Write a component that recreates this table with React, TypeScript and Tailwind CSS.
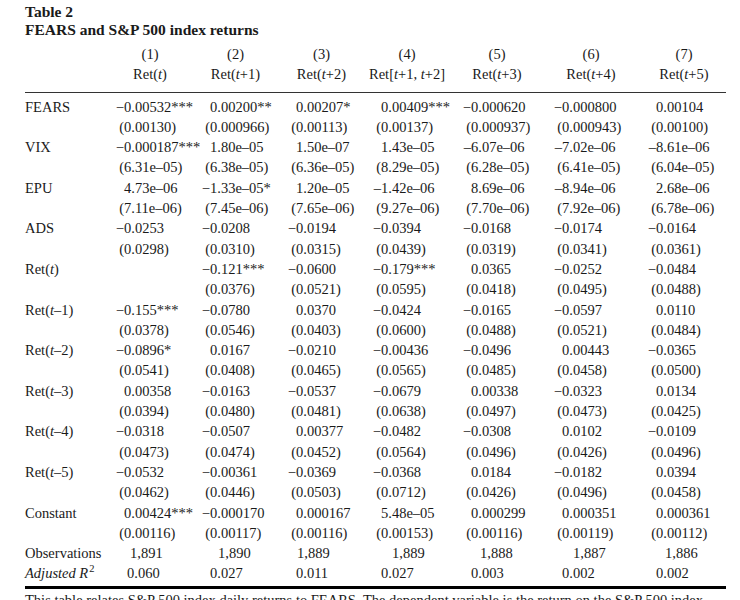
import type { ReactNode } from "react";

const T = () => <span className="italic">t</span>;

type Row = { label: ReactNode; coef: string[]; se: string[] };

const rows: Row[] = [
  {
    label: "FEARS",
    coef: ["−0.00532***", "0.00200**", "0.00207*", "0.00409***", "−0.000620", "−0.000800", "0.00104"],
    se: ["(0.00130)", "(0.000966)", "(0.00113)", "(0.00137)", "(0.000937)", "(0.000943)", "(0.00100)"],
  },
  {
    label: "VIX",
    coef: ["−0.000187***", "1.80e–05", "1.50e–07", "1.43e–05", "–6.07e–06", "–7.02e–06", "–8.61e–06"],
    se: ["(6.31e–05)", "(6.38e–05)", "(6.36e–05)", "(8.29e–05)", "(6.28e–05)", "(6.41e–05)", "(6.04e–05)"],
  },
  {
    label: "EPU",
    coef: ["4.73e–06", "−1.33e–05*", "1.20e–05", "–1.42e–06", "8.69e–06", "–8.94e–06", "2.68e–06"],
    se: ["(7.11e–06)", "(7.45e–06)", "(7.65e–06)", "(9.27e–06)", "(7.70e–06)", "(7.92e–06)", "(6.78e–06)"],
  },
  {
    label: "ADS",
    coef: ["−0.0253", "−0.0208", "−0.0194", "−0.0394", "−0.0168", "−0.0174", "−0.0164"],
    se: ["(0.0298)", "(0.0310)", "(0.0315)", "(0.0439)", "(0.0319)", "(0.0341)", "(0.0361)"],
  },
  {
    label: <>Ret(<T />)</>,
    coef: ["", "−0.121***", "−0.0600", "−0.179***", "0.0365", "−0.0252", "−0.0484"],
    se: ["", "(0.0376)", "(0.0521)", "(0.0595)", "(0.0418)", "(0.0495)", "(0.0488)"],
  },
  {
    label: <>Ret(<T />–1)</>,
    coef: ["−0.155***", "−0.0780", "0.0370", "−0.0424", "−0.0165", "−0.0597", "0.0110"],
    se: ["(0.0378)", "(0.0546)", "(0.0403)", "(0.0600)", "(0.0488)", "(0.0521)", "(0.0484)"],
  },
  {
    label: <>Ret(<T />–2)</>,
    coef: ["−0.0896*", "0.0167", "−0.0210", "−0.00436", "−0.0496", "0.00443", "−0.0365"],
    se: ["(0.0541)", "(0.0408)", "(0.0465)", "(0.0565)", "(0.0485)", "(0.0458)", "(0.0500)"],
  },
  {
    label: <>Ret(<T />–3)</>,
    coef: ["0.00358", "−0.0163", "−0.0537", "−0.0679", "0.00338", "−0.0323", "0.0134"],
    se: ["(0.0394)", "(0.0480)", "(0.0481)", "(0.0638)", "(0.0497)", "(0.0473)", "(0.0425)"],
  },
  {
    label: <>Ret(<T />–4)</>,
    coef: ["−0.0318", "−0.0507", "0.00377", "−0.0482", "−0.0308", "0.0102", "−0.0109"],
    se: ["(0.0473)", "(0.0474)", "(0.0452)", "(0.0564)", "(0.0496)", "(0.0426)", "(0.0496)"],
  },
  {
    label: <>Ret(<T />–5)</>,
    coef: ["−0.0532", "−0.00361", "−0.0369", "−0.0368", "0.0184", "−0.0182", "0.0394"],
    se: ["(0.0462)", "(0.0446)", "(0.0503)", "(0.0712)", "(0.0426)", "(0.0496)", "(0.0458)"],
  },
  {
    label: "Constant",
    coef: ["0.00424***", "−0.000170", "0.000167", "5.48e–05", "0.000299", "0.000351", "0.000361"],
    se: ["(0.00116)", "(0.00117)", "(0.00116)", "(0.00153)", "(0.00116)", "(0.00119)", "(0.00112)"],
  },
];

const observations = ["1,891", "1,890", "1,889", "1,889", "1,888", "1,887", "1,886"];
const obsPad = ["pl-[15px]", "pl-[17px]", "pl-[10px]", "pl-[20px]", "pl-[18px]", "pl-[20px]", "pl-[18px]"];
const adjR2 = ["0.060", "0.027", "0.011", "0.027", "0.003", "0.002", "0.002"];

const headers: ReactNode[] = [
  <>Ret(<T />)</>,
  <>Ret(<T />+1)</>,
  <>Ret(<T />+2)</>,
  <>Ret[<T />+1, <T />+2]</>,
  <>Ret(<T />+3)</>,
  <>Ret(<T />+4)</>,
  <>Ret(<T />+5)</>,
];

const bodyCols = "grid grid-cols-[90px_86px_86px_85px_90px_91px_94px_79px] h-[20.3px] leading-[20.3px]";

function Val({ v }: { v: string }) {
  if (!v) return <div />;
  const first = v[0];
  const hang = first === "−" || first === "–" || first === "(";
  return (
    <div className="flex whitespace-nowrap">
      <span className="w-[9px] shrink-0 text-right">{hang ? first : ""}</span>
      <span>{hang ? v.slice(1) : v}</span>
    </div>
  );
}

export default function App() {
  return (
    <div className="w-[740px] h-[600px] overflow-hidden bg-white pl-[25px] pt-[3px] text-[#1a1a1a] font-['Liberation_Serif',serif]">
      <div className="text-[15.5px] leading-[18px] font-bold">
        <div>Table 2</div>
        <div>FEARS and S&amp;P 500 index returns</div>
      </div>

      <div className="mt-[5px] grid grid-cols-[82.5px_85px_86px_86px_85px_95px_93px_93px] text-[14.5px] leading-[20.3px]">
        <div />
        {headers.map((_, i) => (
          <div key={i} className="text-center">({i + 1})</div>
        ))}
        <div />
        {headers.map((h, i) => (
          <div key={i} className="text-center whitespace-nowrap">{h}</div>
        ))}
      </div>

      <div className="mt-[7px] h-px w-[701px] bg-[#333]" />

      <div className="mt-[4px] text-[14.5px]">
        {rows.map((r, i) => (
          <div key={i}>
            <div className={bodyCols}>
              <div className="whitespace-nowrap">{r.label}</div>
              {r.coef.map((c, j) => (
                <Val key={j} v={c} />
              ))}
            </div>
            <div className={bodyCols}>
              <div />
              {r.se.map((c, j) => (
                <Val key={j} v={c} />
              ))}
            </div>
          </div>
        ))}
        <div className={bodyCols}>
          <div>Observations</div>
          {observations.map((o, j) => (
            <div key={j} className={obsPad[j]}>{o}</div>
          ))}
        </div>
        <div className={bodyCols}>
          <div className="italic whitespace-nowrap">
            Adjusted R<span className="not-italic text-[10.5px] relative -top-[6px] ml-[1px]">2</span>
          </div>
          {adjR2.map((a, j) => (
            <div key={j} className={j === 0 ? "pl-[12px]" : "pl-[9px]"}>{a}</div>
          ))}
        </div>
      </div>

      <div className="mt-[2px] h-[3px] w-[701px] bg-black" />

      <p className="mt-[1px] text-[14.5px] leading-[20px] whitespace-nowrap">
        This table relates S&amp;P 500 index daily returns to FEARS. The dependent variable is the return on the S&amp;P 500 index
      </p>
    </div>
  );
}
